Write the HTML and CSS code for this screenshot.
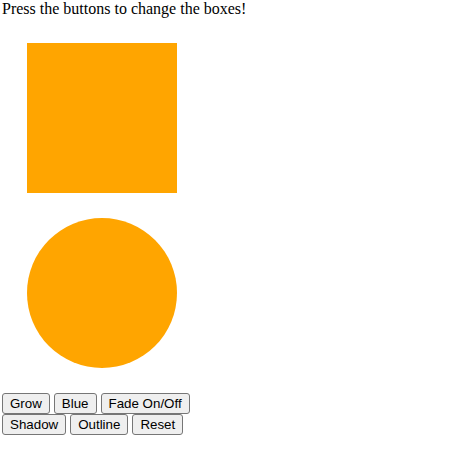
FILE: index.html
```html
<!DOCTYPE html>
<html lang="en">

<head>
    <meta charset="UTF-8">
    <meta name="viewport" content="width=device-width, initial-scale=1.0">
    <title>Boxes</title>
    <link rel="stylesheet" href="styles.css">
</head>

<body>
    Press the buttons to change the boxes!

    <div class="box" id="square"></div>
    <div class="box circle" id="circle"></div>

    <div class="controls">
        <button type="button">Grow</button>
        <button type="button">Blue</button>
        <button type="button">Fade On/Off</button>
        <br>
        <button type="button">Shadow</button>
        <button type="button">Outline</button>
        <button type="button">Reset</button>
    </div>
</body>

</html>
```

FILE: styles.css
```css
body {
    font-family: "Liberation Serif", "Times New Roman", serif;
    font-size: 16px;
    line-height: 18px;
    margin: 0 2px;
}

.box {
    width: 150px;
    height: 150px;
    margin: 25px;
    background-color: orange;
}

.circle {
    border-radius: 50%;
}

.controls {
    line-height: 21px;
}

.controls button {
    font-family: "Liberation Sans", Arial, sans-serif;
    font-size: 13.333px;
    line-height: 15px;
    margin: 0;
    padding: 1px 6px;
    color: #000;
    background-color: #efefef;
    border: 1px solid #767676;
    border-radius: 3px;
    box-shadow: inset 0 0 0 1px #efefef;
    vertical-align: top;
    height: 21px;
    padding: 1px 7px;
}
```
